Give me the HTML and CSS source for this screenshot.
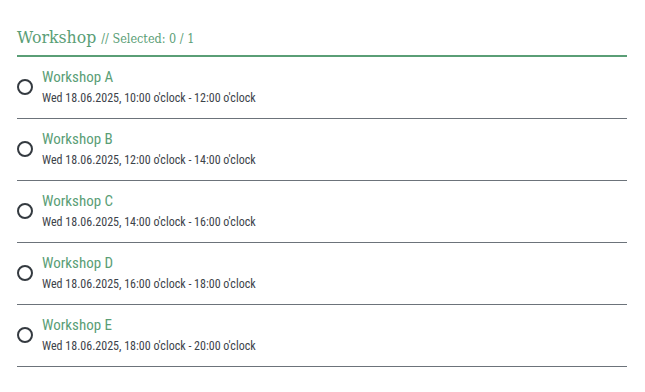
FILE: index.html
```html
<!DOCTYPE html>
<html>
<head>
<meta charset="utf-8">
<link rel="stylesheet" href="styles.css">
</head>
<body>
<div class="group">
  <div class="head">
    <span class="title">Workshop</span>
    <span class="sel">// Selected: 0 / 1</span>
  </div>
  <div class="item">
    <span class="radio"></span>
    <div class="info">
      <div class="name">Workshop A</div>
      <div class="date">Wed 18.06.2025, 10:00 o'clock - 12:00 o'clock</div>
    </div>
  </div>
  <div class="item">
    <span class="radio"></span>
    <div class="info">
      <div class="name">Workshop B</div>
      <div class="date">Wed 18.06.2025, 12:00 o'clock - 14:00 o'clock</div>
    </div>
  </div>
  <div class="item">
    <span class="radio"></span>
    <div class="info">
      <div class="name">Workshop C</div>
      <div class="date">Wed 18.06.2025, 14:00 o'clock - 16:00 o'clock</div>
    </div>
  </div>
  <div class="item">
    <span class="radio"></span>
    <div class="info">
      <div class="name">Workshop D</div>
      <div class="date">Wed 18.06.2025, 16:00 o'clock - 18:00 o'clock</div>
    </div>
  </div>
  <div class="item">
    <span class="radio"></span>
    <div class="info">
      <div class="name">Workshop E</div>
      <div class="date">Wed 18.06.2025, 18:00 o'clock - 20:00 o'clock</div>
    </div>
  </div>
</div>
</body>
</html>
```
FILE: styles.css
```css
html, body { margin: 0; padding: 0; background: #fff; }
body { padding: 0 18px 0 17px; }
.group { width: 610px; }
.head {
  height: 57px;
  box-sizing: border-box;
  padding-top: 27px;
  border-bottom: 2px solid #5a9e76;
  font-family: "DejaVu Serif Condensed", "DejaVu Serif", serif;
  color: #5a9e76;
  display: flex;
  align-items: baseline;
  gap: 5px;
}
.title { font-size: 17.5px; }
.sel { font-size: 12.5px; }
.item {
  height: 62px;
  box-sizing: border-box;
  border-bottom: 1px solid #6c737a;
  display: flex;
  align-items: center;
  gap: 9px;
  padding-bottom: 2px;
}
.radio {
  width: 16px; height: 16px;
  box-sizing: border-box;
  border: 2px solid #343a40;
  border-radius: 50%;
  flex: none;
}
.info { font-family: Roboto, sans-serif; font-stretch: 87.5%; }
.name { color: #5a9e76; font-size: 15px; line-height: 18px; }
.date { color: #3d434a; font-size: 12px; line-height: 16px; margin-top: 4px; }
```
